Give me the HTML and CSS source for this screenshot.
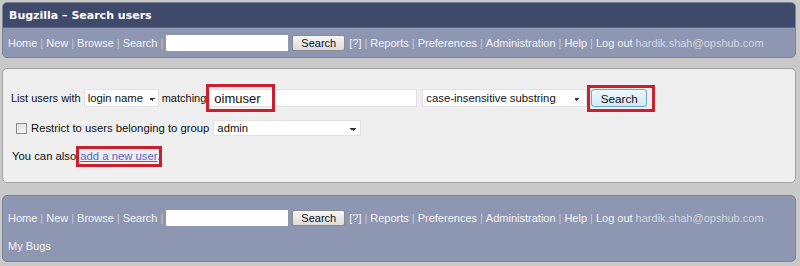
FILE: index.html
```html
<!doctype html>
<html>
    <head>
        <link rel="stylesheet" href="styles.css">
    </head>
    <body>
        <div class="header">
            <div class="title">Bugzilla &ndash; Search users</div>
            <div class="links">
                <a href="#">Home</a><span class="sep">|</span>
                <a href="#">New</a><span class="sep">|</span>
                <a href="#">Browse</a><span class="sep">|</span>
                <a href="#">Search</a><span class="sep">|</span>
                <input class="quick" type="text">
                <button class="btn">Search</button>
                <a href="#">[?]</a><span class="sep">|</span>
                <a href="#">Reports</a><span class="sep">|</span>
                <a href="#">Preferences</a><span class="sep">|</span>
                <a href="#">Administration</a><span class="sep">|</span>
                <a href="#">Help</a><span class="sep">|</span>
                <a href="#">Log out</a>
                <span class="email">hardik.shah@opshub.com</span>
            </div>
        </div>

        <div class="main">
            <div class="row row-search">
                <span>List users with</span>
                <select class="sel sel-field"><option>login name</option></select>
                <span>matching</span>
                <span class="marked">
                    <input class="matchstr" type="text" value="oimuser">
                    <span class="mark mark-input"></span>
                </span>
                <select class="sel sel-type"><option>case-insensitive substring</option></select>
                <span class="marked">
                    <button class="btn btn-search">Search</button>
                    <span class="mark mark-button"></span>
                </span>
            </div>
            <div class="row row-group">
                <input class="check" type="checkbox">
                <span>Restrict to users belonging to group</span>
                <select class="sel sel-group"><option>admin</option></select>
            </div>
            <div class="row row-add">
                <span>You can also</span>
                <span class="marked">
                    <a class="add" href="#">add a new user</a>.
                    <span class="mark mark-link"></span>
                </span>
            </div>
        </div>

        <div class="footer">
            <div class="links">
                <a href="#">Home</a><span class="sep">|</span>
                <a href="#">New</a><span class="sep">|</span>
                <a href="#">Browse</a><span class="sep">|</span>
                <a href="#">Search</a><span class="sep">|</span>
                <input class="quick" type="text">
                <button class="btn">Search</button>
                <a href="#">[?]</a><span class="sep">|</span>
                <a href="#">Reports</a><span class="sep">|</span>
                <a href="#">Preferences</a><span class="sep">|</span>
                <a href="#">Administration</a><span class="sep">|</span>
                <a href="#">Help</a><span class="sep">|</span>
                <a href="#">Log out</a>
                <span class="email">hardik.shah@opshub.com</span>
            </div>
            <div class="links links-saved">
                <a href="#">My Bugs</a>
            </div>
        </div>
    </body>
</html>
```

FILE: styles.css
```css
html,
body {
    margin: 0;
    height: 100%;
    overflow: hidden;
}
body {
    background: #c9c9c9;
    padding: 2px 4px 0 2px;
    font-family: "Liberation Sans", Arial, sans-serif;
    font-size: 11.3px;
    color: #111;
}
a {
    text-decoration: none;
}

/* header and footer bars */
.header,
.footer {
    border: 1px solid #7a8296;
    border-radius: 5px;
    overflow: hidden;
    background: #8d97b1;
}
.title {
    height: 24px;
    display: flex;
    align-items: center;
    padding-left: 6px;
    background: #3f4a6b;
    color: #fff;
    font-family: "DejaVu Sans", Verdana, sans-serif;
    font-weight: bold;
    font-size: 11px;
    border-bottom: 1px solid #5b6684;
}
.links {
    height: 29px;
    display: flex;
    align-items: center;
    padding-left: 5px;
    font-size: 11px;
    color: #f2f4f8;
}
.links a {
    color: #f2f4f8;
}
.sep {
    color: #c3c9d8;
    margin: 0 3px;
}
.email {
    color: #d2d6e0;
    margin-left: 3px;
}
.quick {
    width: 122px;
    height: 16px;
    box-sizing: border-box;
    border: none;
    background: #fff;
    margin: 0 4px 0 0;
    padding: 0;
}
.btn {
    height: 16px;
    box-sizing: border-box;
    padding: 0 8px;
    border: 1px solid #8a8a8a;
    border-radius: 2px;
    background: linear-gradient(#f6f6f6, #dcdcdc);
    font-family: "Liberation Sans", Arial, sans-serif;
    font-size: 11px;
    color: #111;
    margin-right: 4px;
}
.footer {
    margin-top: 12px;
    height: 67px;
    padding-top: 7px;
    box-sizing: border-box;
}
.links-saved {
    height: 28px;
}

/* search form */
.main {
    margin-top: 10px;
    height: 115px;
    box-sizing: border-box;
    border: 1px solid #a3a3a3;
    border-radius: 5px;
    background: #efefef;
    padding: 19px 0 0 8px;
}
.row {
    height: 20px;
    display: flex;
    align-items: center;
    gap: 4px;
}
.row-search {
    gap: 3px;
    font-size: 11px;
}
.row-group {
    margin-top: 10px;
    padding-left: 5px;
}
.row-add {
    margin-top: 8px;
    padding-left: 1px;
}
.sel {
    -webkit-appearance: none;
    appearance: none;
    height: 18px;
    box-sizing: border-box;
    border: 1px solid #e2e2e2;
    padding: 0 0 0 3px;
    font-family: "Liberation Sans", Arial, sans-serif;
    font-size: 11.3px;
    color: #111;
    background-color: #fff;
    background-image: linear-gradient(45deg, transparent 50%, #333 50%), linear-gradient(135deg, #333 50%, transparent 50%);
    background-position: right 6px top 8px, right 3px top 8px;
    background-size: 3px 3px;
    background-repeat: no-repeat;
}
.sel-field {
    width: 75px;
}
.sel-type {
    width: 165px;
    margin-left: 2px;
    background-position: right 9px top 8px, right 6px top 8px;
}
.sel-group {
    width: 148px;
    height: 16px;
    background-position: right 7px top 7px, right 4px top 7px;
}
.matchstr {
    width: 208px;
    height: 18px;
    box-sizing: border-box;
    border: 1px solid #e2e2e2;
    padding: 0 0 0 4px;
    font-family: "Liberation Sans", Arial, sans-serif;
    font-size: 13px;
    color: #111;
    background: #fff;
}
.btn-search {
    height: 18px;
    width: 56px;
    padding: 0;
    font-size: 11.7px;
    border: 1px solid #6ea6c7;
    border-radius: 3px;
    background: linear-gradient(#eef7fd, #d2e8f5);
    margin: 0 0 0 1px;
}
.check {
    -webkit-appearance: none;
    appearance: none;
    box-sizing: border-box;
    width: 11px;
    height: 11px;
    margin: 0;
    border: 1px solid #8e8e8e;
    background: linear-gradient(135deg, #dcdcdc, #fafafa);
}
.add {
    color: #5266c6;
    text-decoration: underline;
}

/* red annotation boxes */
.marked {
    position: relative;
    display: inline-flex;
    align-items: center;
}
.mark {
    position: absolute;
    border: 3px solid #c9202f;
    box-sizing: border-box;
    pointer-events: none;
}
.mark-input {
    left: -3px;
    top: -5px;
    width: 69px;
    height: 28px;
}
.mark-button {
    left: -3px;
    top: -4px;
    width: 68px;
    height: 27px;
}
.mark-link {
    left: -4px;
    top: -4px;
    width: 86px;
    height: 21px;
}
```
